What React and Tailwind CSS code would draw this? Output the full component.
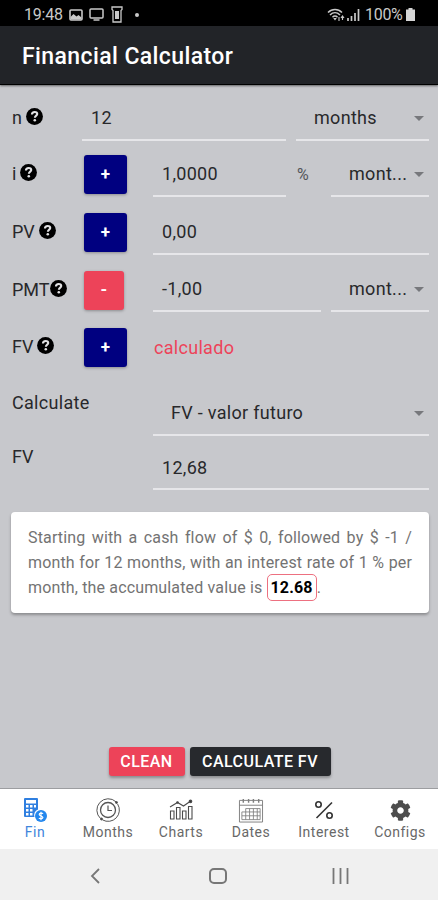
import { FaCog } from "react-icons/fa";

function HelpIcon() {
  return (
    <svg viewBox="0 0 18 18" className="size-[17px] shrink-0">
      <circle cx="9" cy="9" r="8.9" fill="#000" />
      <path d="M6.3 6.9C6.3 4.900 7.5 4.200 9.200 4.200c1.700 0 2.700.8 2.700 2.200 0 1.800-2.500 1.700-2.500 4" fill="none" stroke="#e2e2e4" strokeWidth="2.200" />
      <circle cx="9.300" cy="13" r="1.350" fill="#e2e2e4" />
    </svg>
  );
}

function Label({ text, help, gap = "gap-1" }) {
  return (
    <div className={`flex w-[72px] shrink-0 items-center tracking-normal ${gap}`}>
      <span className="pt-[3px]">{text}</span>
      {help && <HelpIcon />}
    </div>
  );
}

function SignButton({ sign }) {
  const color = sign === "-" ? "w-10 bg-[#ed4359] pb-1" : "w-[43px] bg-[#000080] pb-0.5";
  return (
    <div className="w-[69px] shrink-0">
      <button type="button" className={`flex h-[39px] items-center justify-center rounded-[3px] text-[17px] font-bold text-white shadow-[0_1px_3px_rgba(0,0,0,0.3)] ${color}`}>
        {sign}
      </button>
    </div>
  );
}

function Input({ value, className = "flex-1" }) {
  return (
    <div className={`flex h-[44px] items-center border-b-2 border-[#e6e6e9] pl-[9px] ${className}`}>
      {value}
    </div>
  );
}

function Select({ value, className = "w-[98px] shrink-0" }) {
  return (
    <div className={`flex h-[44px] items-center justify-between border-b-2 border-[#e6e6e9] pr-[5px] pl-[18px] ${className}`}>
      <span className="whitespace-nowrap">{value}</span>
      <svg viewBox="0 0 10 5" className="h-[5px] w-[10px]">
        <path d="M0 0h10L5 5z" fill="#77787c" />
      </svg>
    </div>
  );
}

function StatusBar() {
  return (
    <div className="flex h-[26px] items-center bg-black pt-[3px] pl-6 text-[#c9c9c9]">
      <span className="w-[39px] text-[16px] tracking-[-0.2px]">19:48</span>
      <svg viewBox="0 0 14 12" className="ml-[6px] h-3 w-[14px]">
        <rect x="1" y="1" width="12" height="10" rx="1" fill="none" stroke="#c9c9c9" strokeWidth="1.6" />
        <path d="M1.5 10.5V8l3-3 3 2.500 2-1.500 3 2.500v2z" fill="#c9c9c9" />
      </svg>
      <svg viewBox="0 0 15 13" className="ml-[6px] h-[13px] w-[15px]">
        <rect x="1" y="1" width="13" height="9" rx="1" fill="none" stroke="#c9c9c9" strokeWidth="1.5" />
        <path d="M4.500 12h6" stroke="#c9c9c9" strokeWidth="1.5" />
      </svg>
      <svg viewBox="0 0 12 17" className="ml-[7px] h-[17px] w-3">
        <path d="M1 1h10v2.500l-1 1V16H2V4.500l-1-1z" fill="none" stroke="#c9c9c9" strokeWidth="1.3" />
        <path d="M4 5h4v8H4z" fill="#c9c9c9" />
      </svg>
      <span className="ml-3 size-1 rounded-full bg-[#c9c9c9]" />
      <svg viewBox="0 0 18 14" className="ml-[188px] h-[14px] w-[18px]" fill="none" stroke="#c9c9c9">
        <path d="M1 4.500C5 .5 11 .5 15 4.500M3 7c3-3 7-3 10 0M5.500 9.200c1.500-1.500 3.500-1.500 5 0" strokeWidth="1.5" />
        <path d="M6.200 10L8 12.500 9.800 10z" fill="#c9c9c9" stroke="none" />
        <path d="M12 9v4M15.500 8v4M14 10l1.500-2 1.500 2" strokeWidth="1.1" />
      </svg>
      <svg viewBox="0 0 13 12" className="ml-[2px] h-3 w-[13px]" stroke="#c9c9c9" strokeWidth="1.7">
        <path d="M1 9v3M4.500 7v5M8 4v8M11.500 0v12" />
      </svg>
      <span className="ml-[5px] w-[41px] text-[16px] tracking-[-0.3px]">100%</span>
      <svg viewBox="0 0 9 13" className="h-[13px] w-[9px]">
        <path d="M2.500 0h4v1.500H9V13H0V1.500h2.500z" fill="#d6d6d6" />
      </svg>
    </div>
  );
}

function CalculatorIcon() {
  return (
    <svg viewBox="0 0 24 24" className="size-6">
      <path fillRule="evenodd" fill="#2f7fe0" d="M2 0h12q1 0 1 1v10.500a6.500 6.500 0 0 0-3.500 7.500H2q-1 0-1-1V1q0-1 1-1zm1 2v3.500h10V2zm0 5v2.500h2.500V7zm4 0v2.500h2.500V7zm4 0v2.500h2V7zm-8 4v2.500h2.500V11zm4 0v2.500h2.500V11zm-4 4v2.500h2.500V15zm4 0v2.500h2.500V15z" />
      <circle cx="18" cy="18" r="6" fill="#2387ee" />
      <path d="M20 15.800c-.5-.8-3.600-1-3.800.6-.2 1.900 3.800 1.200 3.700 3.100-.1 1.500-3.200 1.600-4 .5M18 13.800v8.400" fill="none" stroke="#fff" strokeWidth="1.200" />
    </svg>
  );
}

function ClockIcon() {
  return (
    <svg viewBox="0 0 24 24" className="size-6" fill="none" stroke="#555" strokeWidth="1">
      <path d="M20 3.800A11.300 11.300 0 0 0 4.500 20.500M6.500 21.900A11.300 11.300 0 0 0 21.600 6" />
      <circle cx="12" cy="12" r="7.500" strokeWidth="1.300" />
      <circle cx="20.500" cy="4.500" r="1" fill="#444" />
      <circle cx="5.500" cy="21" r="1" fill="#444" />
      <path d="M12 7.500v5h4" strokeWidth="1.200" />
    </svg>
  );
}

function ChartIcon() {
  return (
    <svg viewBox="0 0 24 24" className="size-6" fill="none" stroke="#4c4c4c" strokeWidth="1.100">
      <path d="M1.500 21v-8h3.500v8zM7.500 21V9.500H11V21zM13.500 21v-8H17V21zM19.500 21V8.500H23V21z" />
      <path d="M1 9L8.500 4.500l6 3.500L21 3.500" />
      <circle cx="21.500" cy="3.300" r="1.300" fill="#333" />
      <circle cx="8.500" cy="4.500" r=".8" fill="#333" />
    </svg>
  );
}

function CalendarIcon() {
  return (
    <svg viewBox="0 0 26 26" className="h-[25px] w-[26px]" fill="none" stroke="#808080">
      <path d="M1 2.500h24v22.500H1zM1 7.500h24" strokeWidth="1" />
      <path d="M5 1v4M10.500 1v4M15.500 1v4M21 1v4" strokeWidth="1.500" />
      <path d="M3.500 14.500h19M3.500 18.500h19M3.500 22.500h19M3.500 14.500v8M7.500 11v11.500M11.500 11v11.500M15.500 11v11.500M19.500 11v11.500M22.500 11v11.500M7.500 11h15" strokeWidth=".9" />
    </svg>
  );
}

function PercentIcon() {
  return (
    <svg viewBox="0 0 24 24" className="size-6" fill="none" stroke="#333" strokeWidth="1.600">
      <circle cx="6.500" cy="6.500" r="2.700" />
      <circle cx="17.500" cy="17.500" r="2.700" />
      <path d="M20 4.500L4.500 20" />
    </svg>
  );
}

const tabs = [
  { name: "Fin", icon: <CalculatorIcon />, style: "w-[70px] text-[#3f86dc]" },
  { name: "Months", icon: <ClockIcon />, style: "w-[76px]" },
  { name: "Charts", icon: <ChartIcon />, style: "w-[70px]" },
  { name: "Dates", icon: <CalendarIcon />, style: "w-[70px]" },
  { name: "Interest", icon: <PercentIcon />, style: "w-[76px]" },
  { name: "Configs", icon: <FaCog className="size-[21px] text-[#4d4d4d]" />, style: "w-[76px]" },
];

export default function App() {
  return (
    <div className="flex h-[900px] w-[438px] flex-col overflow-hidden bg-[#c7c8cc] font-[Roboto,sans-serif] text-[18px] leading-6 text-[#28282b]">
      <StatusBar />
      <header className="flex h-[59px] items-center border-b border-black bg-[#222428] pt-[3px] pl-[22px] text-[23px] font-medium tracking-[0.4px] text-white shadow-[0_1px_2px_rgba(0,0,0,0.5)]">
        Financial Calculator
      </header>

      <main className="flex flex-1 flex-col pr-[9px] pl-3 tracking-[0.3px]">
        <div className="flex h-14 items-end">
          <div className="flex h-[48px] items-center pb-0.5"><Label text="n" help /></div>
          <Input value="12" className="-ml-0.5 w-[204px]" />
          <Select value="months" className="ml-[10px] flex-1" />
        </div>
        <div className="flex h-14 items-end">
          <div className="flex h-[48px] items-center pb-0.5"><Label text="i" help /></div>
          <div className="pb-[3px]"><SignButton sign="+" /></div>
          <Input value="1,0000" className="w-[133px]" />
          <div className="flex h-[44px] w-[45px] items-center pb-px pl-[11px] text-[16px] text-[#55565a]">%</div>
          <Select value="mont..." />
        </div>
        <div className="flex h-[58px] items-end">
          <div className="flex h-[48px] items-center pb-0.5"><Label text="PV" help /></div>
          <div className="pb-[3px]"><SignButton sign="+" /></div>
          <Input value="0,00" />
        </div>
        <div className="flex h-[57px] items-end">
          <div className="flex h-[46px] items-center pb-0.5"><Label text="PMT" help gap="gap-0" /></div>
          <div className="pb-0.5"><SignButton sign="-" /></div>
          <Input value="-1,00" className="mr-[10px] w-[168px]" />
          <Select value="mont..." />
        </div>
        <div className="flex h-[58px] items-end">
          <div className="flex h-[48px] items-center pb-0.5"><Label text="FV" help /></div>
          <div className="pb-[3px]"><SignButton sign="+" /></div>
          <div className="flex h-[44px] items-center pb-px pl-px text-[#ed4359]">calculado</div>
        </div>
        <div className="flex h-[66px] items-end">
          <div className="h-[45px] w-[141px]">Calculate</div>
          <Select value="FV - valor futuro" className="flex-1" />
        </div>
        <div className="flex h-[54px] items-end">
          <div className="h-[45px] w-[141px] tracking-normal">FV</div>
          <Input value="12,68" className="flex-1 pt-0.5" />
        </div>

        <section className="mt-[22px] -ml-px h-[101px] rounded-[4px] bg-white px-[17px] pt-[13px] text-justify text-[16px] leading-[25px] tracking-[0.15px] text-[#737373] shadow-[0_2px_3px_rgba(0,0,0,0.3)]">
          Starting with a cash flow of $ 0, followed by $ -1 / month for 12 months, with an interest rate of 1 % per month, the accumulated value is <span className="rounded-[5px] border border-[#ed7080] px-[3px] py-[3px] font-bold text-black">12.68</span>.
        </section>

        <div className="mt-auto -ml-px mr-px mb-3 flex justify-center gap-[5px] text-[16px] font-medium tracking-[0.45px] text-white">
          <button type="button" className="h-[29px] w-[76px] rounded-[3px] bg-[#ed4359] pt-px shadow-[0_2px_3px_rgba(0,0,0,0.3)]">CLEAN</button>
          <button type="button" className="h-[29px] w-[141px] rounded-[3px] bg-[#27292d] pt-px shadow-[0_2px_3px_rgba(0,0,0,0.3)]">CALCULATE FV</button>
        </div>
      </main>

      <nav className="flex h-[61px] shrink-0 border-t border-[#9c9da0] bg-white text-[14px] text-[#686868]">
        {tabs.map((tab) => (
          <div key={tab.name} className={`flex shrink-0 flex-col items-center pt-2 ${tab.style}`}>
            <div className="flex h-[26px] items-center">{tab.icon}</div>
            <span className="leading-[18px] tracking-[0.5px]">{tab.name}</span>
          </div>
        ))}
      </nav>

      <footer className="flex h-[51px] shrink-0 items-center bg-[#f0f0f0] pt-0.5 pl-[90px]">
        <svg viewBox="0 0 10 16" className="h-4 w-[10px]">
          <path d="M9 1L2 8l7 7" fill="none" stroke="#777" strokeWidth="1.800" />
        </svg>
        <div className="ml-[109px] h-4 w-[18px] rounded-[5px] border-2 border-[#777]" />
        <svg viewBox="0 0 17 16" className="ml-[105px] h-4 w-[17px]">
          <path d="M1.500 0v16M8.500 0v16M15.500 0v16" stroke="#777" strokeWidth="1.800" />
        </svg>
      </footer>
    </div>
  );
}
